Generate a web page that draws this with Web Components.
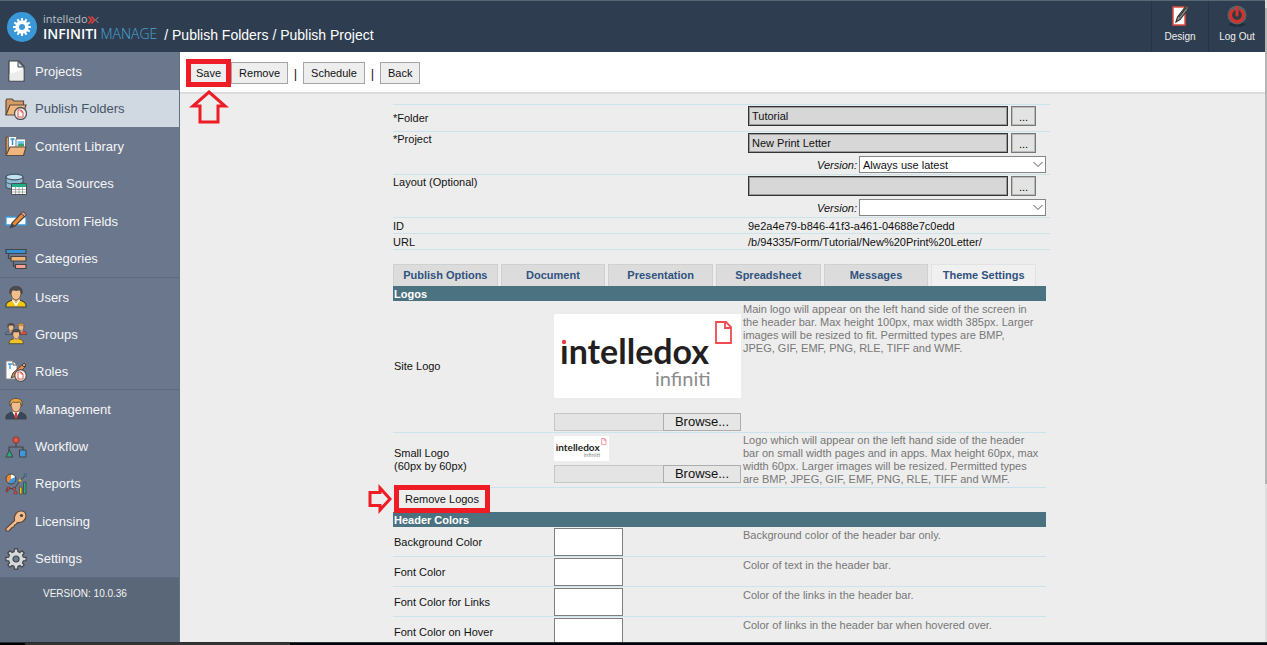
<!DOCTYPE html>
<html lang="en">
<head>
<meta charset="utf-8">
<title>Infiniti Manage - Publish Project</title>
<style>
html, body { margin: 0; height: 100%; }
body { font-family: "Liberation Sans", Arial, sans-serif; font-size: 11px; color: #111; background: #ededed; overflow: hidden; }
</style>
</head>
<body>
<manage-app>
  <app-header slot="header"></app-header>
  <side-nav slot="nav">
    <nav-group style="--rows-height:226px">
      <nav-item icon="projects">Projects</nav-item>
      <nav-item icon="publish" selected>Publish Folders</nav-item>
      <nav-item icon="content">Content Library</nav-item>
      <nav-item icon="data">Data Sources</nav-item>
      <nav-item icon="fields">Custom Fields</nav-item>
      <nav-item icon="categories">Categories</nav-item>
    </nav-group>
    <nav-group style="--rows-height:112px">
      <nav-item icon="users">Users</nav-item>
      <nav-item icon="groups">Groups</nav-item>
      <nav-item icon="roles">Roles</nav-item>
    </nav-group>
    <nav-group style="--rows-height:188px">
      <nav-item icon="management">Management</nav-item>
      <nav-item icon="workflow">Workflow</nav-item>
      <nav-item icon="reports">Reports</nav-item>
      <nav-item icon="licensing">Licensing</nav-item>
      <nav-item icon="settings">Settings</nav-item>
    </nav-group>
    <span slot="version">VERSION: 10.0.36</span>
  </side-nav>
  <tool-bar slot="toolbar">
    <call-out arrow="up"><tool-button>Save</tool-button></call-out>
    <tool-button>Remove</tool-button>
    <tool-separator></tool-separator>
    <tool-button>Schedule</tool-button>
    <tool-separator></tool-separator>
    <tool-button>Back</tool-button>
  </tool-bar>

  <detail-list>
    <picker-row label="*Folder" value="Tutorial"></picker-row>
    <picker-row label="*Project" value="New Print Letter" version="Always use latest"></picker-row>
    <picker-row label="Layout (Optional)" value="" version=""></picker-row>
    <text-row label="ID">9e2a4e79-b846-41f3-a461-04688e7c0edd</text-row>
    <text-row label="URL">/b/94335/Form/Tutorial/New%20Print%20Letter/</text-row>
  </detail-list>
  <tab-strip></tab-strip>
  <settings-section heading="Logos">
    <logo-row label="Site Logo" size="large">Main logo will appear on the left hand side of the screen in the header bar. Max height 100px, max width 385px. Larger images will be resized to fit. Permitted types are BMP, JPEG, GIF, EMF, PNG, RLE, TIFF and WMF.</logo-row>
    <logo-row label="Small Logo" note="(60px by 60px)" size="small">Logo which will appear on the left hand side of the header bar on small width pages and in apps. Max height 60px, max width 60px. Larger images will be resized. Permitted types are BMP, JPEG, GIF, EMF, PNG, RLE, TIFF and WMF.</logo-row>
    <action-row><call-out arrow="right"><tool-button>Remove Logos</tool-button></call-out></action-row>
  </settings-section>
  <settings-section heading="Header Colors">
    <color-row label="Background Color">Background color of the header bar only.</color-row>
    <color-row label="Font Color">Color of text in the header bar.</color-row>
    <color-row label="Font Color for Links">Color of the links in the header bar.</color-row>
    <color-row label="Font Color on Hover">Color of links in the header bar when hovered over.</color-row>
  </settings-section>
</manage-app>

<script>
const define = (name, render) => customElements.define(name, class extends HTMLElement {
  constructor() { super(); this.attachShadow({ mode: 'open' }); }
  connectedCallback() { this.shadowRoot.innerHTML = render(this); }
});

const gearPath = (cx, cy, outer, inner, teeth) => {
  const pts = [];
  const step = Math.PI * 2 / teeth;
  for (let i = 0; i < teeth; i++) {
    const a = i * step - Math.PI / 2;
    [[-.32, inner], [-.2, outer], [.2, outer], [.32, inner]].forEach(([k, r]) =>
      pts.push((cx + Math.cos(a + k * step) * r).toFixed(2) + ' ' + (cy + Math.sin(a + k * step) * r).toFixed(2)));
  }
  return 'M' + pts.join('L') + 'Z';
};

const person = (hair, shirt, extra = '') => `
  <path d="M1 21v-2c0-3 3-4 6.500-5h7c3.500 1 6.500 2 6.500 5v2z" fill="${shirt}" stroke="#444" stroke-width="1.200"/>
  <path d="M7.500 13.500 11 18l3.500-4.500V11h-7z" fill="#e6ad7c"/>${extra}
  <path d="M6 6c0-5 10-5 10 0 0 4-2 8-5 8s-5-4-5-8z" fill="#f2bd8c" stroke="#5a4a3c" stroke-width=".8"/>
  <path d="M5 8C4 2 7 .5 11 .5S18 2 17 8l-1-1c0-2-1-3-2-3-3 1-5 0-6 0-1 1-2 1-2 3z" fill="${hair}" stroke="#444" stroke-width=".8"/>`;

const ICONS = {
  projects: `<path d="M4 1h10l5 5.500V21H4z" fill="#fff" stroke="#3f4247" stroke-width="1.200"/><path d="M4.600 14 18.400 9v11.400H4.600z" fill="#ececec"/><path d="M13 1.500V7h5.500z" fill="#cfe6f5" stroke="#3f4247"/>`,
  publish: `<path d="M1 17V2.500L2 1h5l2 2h9.500v4" fill="#d59a66" stroke="#5b4b40" stroke-width="1.200"/><path d="M1 17 5 7h16l-3 10z" fill="#eeb67d" stroke="#5b4b40" stroke-width="1.200"/><circle cx="15.500" cy="15.500" r="6" fill="#eee" stroke="#555" stroke-width="1.300"/><path d="M13 12h3l2 2v5h-5zM16 12v2h2" fill="#fff" stroke="#e8564c"/>`,
  content: `<path d="M1 19V3l1-1h3v14" fill="#d59a66" stroke="#5b4b40" stroke-width="1.200"/><path d="M3.500 1.500h8V14h-8z" fill="#fff" stroke="#777"/><path d="M5.500 4h4M7.500 4v6" stroke="#2d8ed0" stroke-width="1.500"/><path d="M11 4h9.500v10H11z" fill="#fff" stroke="#777"/><path d="M12.500 6h6.500v5h-6.500z" fill="#6fc7ee"/><path d="M12.500 11c2-4 4-2 6.500-2v2.500h-6.500z" fill="#38a169"/><path d="M1 20.500 5 12h16l-2.500 8.500z" fill="#eeb67d" stroke="#5b4b40" stroke-width="1.200"/>`,
  data: `<path d="M1 4v10c3 3 13 3 17 0V4z" fill="#8bbbd8" stroke="#485964" stroke-width="1.200"/><path d="M1 9c3 3 13 3 17 0" fill="none" stroke="#485964"/><ellipse cx="9.500" cy="4" rx="8.500" ry="2.800" fill="#c3e1f1" stroke="#485964" stroke-width="1.200"/><path d="M6.500 10.500h15v11h-15z" fill="#fff" stroke="#4b4f52"/><path d="M7 11h14v3H7z" fill="#1fae85"/><path d="M7 16.500h14M7 19h14M10.500 14v7M14 14v7M17.500 14v7" stroke="#999" stroke-width=".8"/>`,
  fields: `<path d="M1 7h20v8H1z" fill="#fff" stroke="#3c9bd9" stroke-width="1.300"/><path d="M5.500 17.500 7 13 17 2.500l3.500 3L10 16z" fill="#f08a35" stroke="#444" stroke-width="1.200"/><path d="m16 3.500 2-2 3.500 3-2 2z" fill="#d99a94" stroke="#444"/><path d="m5.500 17.500 1.500-4.500 3 3z" fill="#444"/>`,
  categories: `<path d="M3.500 5.500v5H6M8.500 13v5.500H10" fill="none" stroke="#444" stroke-width="1.200"/><path d="M1 1.500h20v4H1z" fill="#3392d6" stroke="#444" stroke-width="1.200"/><path d="M6 8.500h15v4.500H6z" fill="#efb37a" stroke="#444" stroke-width="1.200"/><path d="M10.500 16.500H21v4H10.500z" fill="#f4a198" stroke="#444" stroke-width="1.200"/>`,
  users: person('#4c4c4c', '#f2c613', '<path d="m7.500 14 3.500 5 3.500-5" fill="none" stroke="#fff" stroke-width="1.500"/>'),
  groups: `<g transform="translate(0 0) scale(.55)">${person('#5a4a44', '#68769a')}</g><g transform="translate(10 0) scale(.55)">${person('#f09a30', '#df4b3f')}</g><g transform="translate(3.500 6) scale(.7)">${person('#4c4c4c', '#f2c613')}</g>`,
  roles: `<path d="M1 1h7l4 4v14H1z" fill="#fff" stroke="#888"/><path d="M8 1v4h4" fill="none" stroke="#555"/><path d="M3 4h4M5 4v5" stroke="#3c9bd9" stroke-width="1.300"/><path d="m6 18 2-5 10-9 3 2-10 10z" fill="#f08a35" stroke="#444"/><path d="m17 5 2-2 2 2-2 2z" fill="#d99a94" stroke="#444"/><circle cx="15.500" cy="15.500" r="5.800" fill="#eee" stroke="#555" stroke-width="1.300"/><path d="M13 12h3l2 2v5h-5zM16 12v2h2" fill="#fff" stroke="#e8564c"/>`,
  management: person('#f0a83c', '#33485c', '<path d="m7.500 14 3.500 6 3.500-6" fill="#fff"/><path d="m10 15 1-1 1 1 .7 4-1.700 2-1.700-2z" fill="#dd3a36"/>'),
  workflow: `<path d="M11 6v5M4 15v-4h14v3" fill="none" stroke="#444" stroke-width="1.200"/><circle cx="11" cy="4" r="3.200" fill="#e8503f" stroke="#7b3b36"/><path d="m1 21 3.500-7L8 21z" fill="#2ba884" stroke="#444"/><path d="M14.500 14h6.500v7h-6.500z" fill="#3c98da" stroke="#444"/>`,
  reports: `<circle cx="6" cy="6" r="5" fill="#3c98da"/><path d="M6 6V1a5 5 0 0 0-3 9z" fill="#f08a35"/><path d="M6 6V1a5 5 0 0 1 4.500 3z" fill="#fff"/><circle cx="6" cy="6" r="5" fill="none" stroke="#444"/><path d="M2 18.500V15l7 1 6-8 5.500-6" fill="none" stroke="#444"/><g fill="#e24a3b" stroke="#5a3a3a" stroke-width=".6"><path d="M1 17h2v2H1zM2 14h2.500v2.500H2zM8 14.500h2.500V17H8zM9 18.500h3V21H9z"/></g><path d="M14.500 14H17v7h-2.500z" fill="#f2c613" stroke="#444" stroke-width=".8"/><path d="M18.500 9H21v12h-2.500z" fill="#2ba884" stroke="#444" stroke-width=".8"/><circle cx="15" cy="7.500" r="1.200" fill="#f2c613"/><circle cx="20.500" cy="2" r="1.300" fill="#3c98da" stroke="#444" stroke-width=".6"/>`,
  licensing: `<path d="M9.500 10.500C8.500 5 12 1 16 1c3 0 5 2 5 5 0 4-4 7-8.500 6.500L11 14.500l-1.500.5-.5 2-2 .5L4 21H1v-2.500z" fill="#f6bc8b" stroke="#5d4a3c" stroke-width="1.200"/><circle cx="16.500" cy="5.500" r="1.600" fill="#444"/>`,
  settings: `<path d="${gearPath(11, 11, 10.2, 7.6, 8)}" fill="#d5d8dc" stroke="#444" stroke-width="1.200"/><circle cx="11" cy="11" r="3" fill="#6b788e" stroke="#444" stroke-width="1.200"/>`,
  design: `<path d="M4 2h12v18H4z" fill="#fff" stroke="#df4b3f" stroke-width="1.500"/><path d="m7 17 1.500-5L17 1l3 2-9 11.500z" fill="#8b9092" stroke="#333" stroke-width="1.200"/><path d="M10 12 17 3" stroke="#333" stroke-width="1.200"/><circle cx="18" cy="2.500" r="1.500" fill="#555"/>`,
  logout: `<ellipse cx="11" cy="19.500" rx="8" ry="2" fill="#1f2c39"/><circle cx="11" cy="10" r="9.500" fill="#5b6267"/><circle cx="11" cy="10" r="5" fill="#333a40"/><path d="M6.500 5.500a6.500 6.500 0 1 0 9 0" fill="none" stroke="#dc2f2b" stroke-width="3" stroke-linecap="round"/><path d="M11 2.500V10" stroke="#dc2f2b" stroke-width="3" stroke-linecap="round"/>`,
  badge: `<circle cx="11" cy="11" r="11" fill="#3a97d8"/><path d="${gearPath(11, 11, 6.6, 4.8, 12)}" fill="#fff"/><circle cx="11" cy="11" r="2.200" fill="#3a97d8"/>`
};

define('app-icon', el => `
<style>:host{display:block;width:22px;height:22px;flex:none}svg{display:block;width:100%;height:100%}</style>
<svg viewBox="0 0 22 22" aria-hidden="true">${ICONS[el.getAttribute('name')]}</svg>`);

define('manage-app', () => `
<style>
:host{display:grid;height:100vh;grid-template:minmax(0,1fr) 3px / minmax(0,1fr) 2px;overflow:hidden}
.page{display:grid;grid-template:52px minmax(0,1fr) / 180px minmax(0,1fr);min-height:0}
header{grid-column:1/-1}
nav{min-height:0;overflow:hidden}
main{display:flex;flex-direction:column;min-width:0;min-height:0;background:#ededed}
.scroll{flex:1;min-height:0;overflow:hidden;padding:9px 2px 0 0}
.sheet{max-width:657px;margin:0 auto}
.track{background:#dedede;padding-top:8px}
.thumb{height:75%;background:#b5b5b5}
.taskbar{grid-column:1/-1;border-top:1px solid #2b3035;background:linear-gradient(90deg,#000 25px,#333 25px,#333 290px,#02060a 290px)}
</style>
<div class="page">
  <header><slot name="header"></slot></header>
  <nav><slot name="nav"></slot></nav>
  <main><slot name="toolbar"></slot><div class="scroll"><div class="sheet"><slot></slot></div></div></main>
</div>
<div class="track"><div class="thumb"></div></div>
<div class="taskbar"></div>`);

define('app-header', () => `
<style>
:host{display:flex;box-sizing:border-box;height:52px;border-top:1px solid #5a6671;background:#2e3e50;color:#fff}
.brand{display:flex;align-items:center;flex:1;padding-left:7px}
app-icon{width:30px;height:30px}
.name{margin-left:6px;font-family:"Open Sans","Noto Sans",sans-serif;white-space:nowrap}
.small{display:flex;align-items:center;height:14px;font-size:11px;line-height:14px;color:#b9c0c7}
.small svg{width:12px;height:8px;margin-top:2px}
.big{font-size:14px;line-height:16px;font-weight:600}
.big b{font-weight:300;color:#4aa5d8;margin-left:3px}
.crumb{margin:17px 0 0 7px;font-size:14px;line-height:16px;white-space:nowrap}
.link{display:flex;flex-direction:column;align-items:center;gap:4px;box-sizing:border-box;width:57px;padding-top:4px;border-left:1px solid #263442;color:#eee;font-size:10px;line-height:12px;text-decoration:none;white-space:nowrap}
.link app-icon{width:22px;height:22px}
</style>
<div class="brand"><app-icon name="badge"></app-icon>
<div class="name"><div class="small"><span>intelledo</span><svg viewBox="0 0 12 8" fill="none" aria-hidden="true"><path d="m.5.500 3 3.500-3 3.500M3.500.500l3 3.500-3 3.500" stroke="#e8413a" stroke-width="1.500"/><path d="M10.500 1 7.500 4l3 3" stroke="#8d98a3"/></svg></div>
<div class="big">INFINITI<b>MANAGE</b></div></div>
<div class="crumb">/ Publish Folders / Publish Project</div></div>
<a class="link" href="#design"><app-icon name="design"></app-icon>Design</a>
<a class="link" href="#logout"><app-icon name="logout"></app-icon>Log Out</a>`);

define('side-nav', () => `
<style>
:host{display:block;height:100%;box-sizing:border-box;background:#5a6778;color:#fff;border-right:1px solid #66727f}
.version{padding:9px 0 0 43px;font-size:10px;line-height:14px;color:#f4f4f4}
</style><slot></slot><div class="version"><slot name="version"></slot></div>`);

define('nav-group', () => `
<style>:host{display:grid;grid-auto-rows:1fr;box-sizing:border-box;height:var(--rows-height);background:#6b778d;border-bottom:1px solid #5e6a7f}</style><slot></slot>`);

define('nav-item', el => `
<style>
:host{display:block}
:host([selected]){background:#d0d8e1}
a{display:flex;align-items:center;gap:8px;box-sizing:border-box;height:100%;padding:1px 0 0 5px;color:#f5f6f8;font-size:13px;text-decoration:none}
:host([selected]) a{color:#44566a}
</style><a href="#${el.getAttribute('icon')}"><app-icon name="${el.getAttribute('icon')}"></app-icon><span><slot></slot></span></a>`);

define('tool-bar', () => `
<style>:host{display:flex;align-items:center;box-sizing:border-box;height:42px;flex:none;padding:2px 0 0 8px;background:#fff;border-bottom:2px solid #dcdcdc}
::slotted(call-out){margin-right:2px}</style><slot></slot>`);

define('tool-button', () => `
<style>:host{display:inline-block}button{display:block;height:22px;padding:0 var(--button-pad,7px);border:1px solid #a5a5a5;background:#eee;font:11px/14px "Liberation Sans",Arial,sans-serif;color:#111;white-space:nowrap}</style>
<button type="button"><slot></slot></button>`);

define('tool-separator', () => `
<style>:host{display:block;width:15px;text-align:center;font-size:13px;color:#222}</style>|`);

define('call-out', el => `
<style>
:host{display:inline-block;position:relative}
.frame{position:absolute;inset:-3px -2px;border:5px solid #ee1c24;pointer-events:none}
svg{position:absolute;fill:none;stroke:#ee1c24;stroke-width:3;overflow:visible}
.up{left:2px;top:28px}
.right{right:calc(100% + 4px);top:-3px}
</style><slot></slot><div class="frame"></div>
${el.getAttribute('arrow') === 'up'
  ? `<svg class="up" width="38" height="34" viewBox="0 0 38 34" aria-hidden="true"><path d="M19 2 35 16H28V32H10V16H3Z"/></svg>`
  : `<svg class="right" width="24" height="28" viewBox="0 0 24 28" aria-hidden="true"><path d="M22 14 12 3V7.500H2V20.500H12V25Z"/></svg>`}`);

define('detail-list', () => `
<style>:host{display:block;border-top:1px solid #cbe3ec;margin-top:1px}</style><slot></slot>`);

define('picker-row', el => {
  const version = el.getAttribute('version');
  const label = el.getAttribute('label');
  return `
<style>
:host{display:grid;grid-template-columns:354px minmax(0,1fr);box-sizing:border-box;border-bottom:1px solid #cbe3ec;height:${version === null ? 27 : 43}px}
.name{line-height:14px;padding-top:${version === null ? 6 : 0}px}
.pick{display:flex;gap:3px;padding:1px 0 0 1px}
input{box-sizing:border-box;width:260px;height:20px;padding:0 3px;border:1px solid #333;outline:1px solid #9a9a9a;outline-offset:-2px;border-radius:0;background:#d7d7d7;font:11px "Liberation Sans",Arial,sans-serif;color:#111}
button{box-sizing:border-box;width:25px;height:20px;padding:2px 0 0;border:1px solid #777;outline:1px solid #bbb;outline-offset:-2px;background:#e3e3e3;font:11px "Liberation Sans",Arial,sans-serif}
.version{display:flex;justify-content:flex-end;align-items:center;gap:2px;padding:3px 4px 0 0}
.version label{font-style:italic}
.box{position:relative;width:187px}
select{display:block;appearance:none;box-sizing:border-box;width:100%;height:17px;padding:0 3px;border:1px solid #858585;border-radius:0;background:#fff;font:11px "Liberation Sans",Arial,sans-serif;color:#111}
svg{position:absolute;right:3px;top:5px;width:10px;height:7px;pointer-events:none}
</style>
<label class="name" for="value">${label}</label>
<div><div class="pick"><input id="value" readonly value="${el.getAttribute('value')}"><button type="button" aria-label="Choose ${label}">...</button></div>
${version === null ? '' : `<div class="version"><label for="version">Version:</label><div class="box"><select id="version"><option>${version}</option></select><svg viewBox="0 0 10 7" aria-hidden="true"><path d="m.5 1 4.500 4.500L9.500 1" fill="none" stroke="#555"/></svg></div></div>`}</div>`;
});

define('text-row', el => `
<style>:host{display:grid;grid-template-columns:355px minmax(0,1fr);box-sizing:border-box;height:16px;line-height:17px;border-bottom:1px solid #cbe3ec}</style>
<span>${el.getAttribute('label')}</span><span><slot></slot></span>`);

define('tab-strip', () => `
<style>
:host{display:grid;grid-template-columns:repeat(6,minmax(0,1fr));gap:3px;margin:14px 14px 0 0}
button{box-sizing:border-box;height:22px;padding:0 0 2px;border:1px solid #d0d0d0;border-bottom:0;background:#dcdcdc;color:#30527f;font:bold 11px "Liberation Sans",Arial,sans-serif;white-space:nowrap}
[aria-selected=true]{background:#f0f0f0;border-color:#e2e2e2}
</style>
${['Publish Options', 'Document', 'Presentation', 'Spreadsheet', 'Messages', 'Theme Settings'].map((t, i) =>
  `<button type="button" role="tab" aria-selected="${i === 5}">${t}</button>`).join('')}`);

define('settings-section', el => `
<style>
:host{display:block;margin-right:4px}
h2{margin:0;padding-left:1px;height:15px;background:#4b7280;color:#fff;font-size:11px;line-height:17px}
</style><h2>${el.getAttribute('heading')}</h2><slot></slot>`);

define('brand-logo', () => `
<style>:host{display:block;background:#fff}svg{display:block;width:100%;height:100%}</style>
<svg viewBox="0 0 187 84" role="img" aria-label="Intelledox Infiniti">
<text x="6" y="50" font-family="Lato, sans-serif" font-size="34" font-weight="700" fill="#231f20">intelledox</text>
<path d="M6 22h8v9H6z" fill="#fff"/><circle cx="10" cy="28" r="2.200" fill="#ef3e42"/>
<text x="101" y="72" font-family="Lato, sans-serif" font-size="20" font-weight="400" fill="#8b8c8e">infiniti</text>
<path d="M162 8h10l5 5v16h-15zM171 8v6h6" fill="none" stroke="#ef4b50" stroke-width="1.800"/></svg>`);

define('file-field', el => `
<style>
:host{display:flex;height:18px}
input{flex:1;min-width:0;box-sizing:border-box;border:1px solid #c6c6c6;border-right:0;border-radius:0;background:#e4e4e4;padding:0 3px}
button{box-sizing:border-box;width:78px;border:1px solid #adadad;background:#e6e6e6;padding:0;font:13px "Liberation Sans",Arial,sans-serif;line-height:14px;color:#111}
</style><input type="text" readonly aria-label="${el.getAttribute('label')} file"><button type="button">Browse...</button>`);

const helpStyle = `.help{color:#777;line-height:13px}`;

define('logo-row', el => {
  const large = el.getAttribute('size') === 'large';
  return `
<style>
:host{display:grid;grid-template-columns:161px 187px minmax(0,1fr);column-gap:1px;align-items:start;box-sizing:border-box;height:${large ? 132 : 55}px;border-bottom:1px solid #cbe3ec}
.name{align-self:center;padding-left:1px;line-height:13px}
.media{display:flex;flex-direction:column;margin-left:-1px;width:187px;gap:${large ? 15 : 4}px;padding-top:${large ? 13 : 3}px}
brand-logo{width:${large ? 187 : 55}px;height:${large ? 84 : 25}px}
${helpStyle}
.help{padding:${large ? '2px 9px 0 0' : '1px 5px 0 0'}}
</style>
<div class="name">${el.getAttribute('label')}${el.hasAttribute('note') ? `<br>${el.getAttribute('note')}` : ''}</div>
<div class="media"><brand-logo></brand-logo><file-field label="${el.getAttribute('label')}"></file-field></div>
<div class="help"><slot></slot></div>`;
});

define('action-row', () => `
<style>:host{display:block;box-sizing:border-box;height:24px;padding-left:3px;--button-pad:8px}</style><slot></slot>`);

define('color-row', el => `
<style>
:host{display:grid;grid-template-columns:161px 187px minmax(0,1fr);column-gap:1px;box-sizing:border-box;height:30px;border-bottom:1px solid #cbe3ec}
label{align-self:center;padding-left:1px;line-height:14px}
input{box-sizing:border-box;width:69px;height:28px;margin:1px 0 0 -1px;border:1px solid #7e7e7e;border-radius:0;background:#fff;padding:0 3px}
${helpStyle}
.help{padding-top:2px}
</style><label for="color">${el.getAttribute('label')}</label><div><input id="color" type="text"></div><div class="help"><slot></slot></div>`);
</script>
</body>
</html>
